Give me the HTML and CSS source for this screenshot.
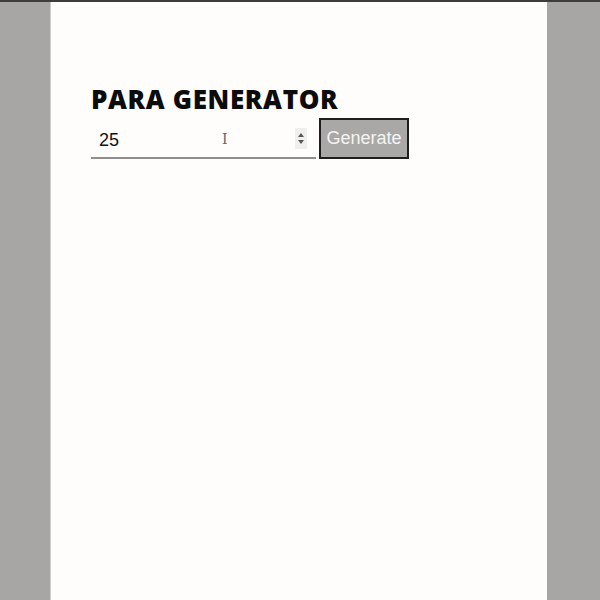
FILE: index.html
```html
<!DOCTYPE html>
<html>
<head>
<meta charset="utf-8">
<link rel="stylesheet" href="styles.css">
</head>
<body>
<div class="topline"></div>
<div class="stage">
  <main class="page">
    <h1 class="title">PARA GENERATOR</h1>
    <form class="controls">
      <div class="field">
        <input class="num" type="number" value="25">
        <span class="spin"><span class="up"></span><span class="down"></span></span>
        <span class="ibeam">I</span>
      </div>
      <button class="gen" type="button">Generate</button>
    </form>
  </main>
</div>
</body>
</html>
```
FILE: styles.css
```css
html, body {
  margin: 0;
  padding: 0;
  height: 100%;
  background: #a7a6a4;
}
.topline {
  height: 2px;
  background: #3d3d3d;
}
.stage {
  display: flex;
  justify-content: flex-start;
  padding-left: 50px;
  height: 598px;
}
.page {
  width: 497px;
  background: #fefdfc;
  border-left: 1px solid #cfcecc;
  box-sizing: border-box;
  padding: 82px 0 0 40px;
}
.title {
  margin: 0;
  font-family: "Open Sans", "Liberation Sans", sans-serif;
  font-weight: 800;
  font-size: 26px;
  line-height: 30px;
  color: #0c0c0c;
  letter-spacing: 0.65px;
}
.controls {
  display: flex;
  align-items: flex-start;
  margin-top: 4px;
  gap: 3px;
}
.field {
  position: relative;
  width: 225px;
  height: 39px;
  border-bottom: 2px solid #8f8e8c;
}
.num {
  width: 100%;
  height: 39px;
  box-sizing: border-box;
  border: none;
  background: transparent;
  font-family: "Liberation Sans", Arial, sans-serif;
  font-size: 18px;
  color: #111;
  padding: 5px 0 0 8px;
  outline: none;
  -moz-appearance: textfield;
}
.num::-webkit-inner-spin-button,
.num::-webkit-outer-spin-button {
  -webkit-appearance: none;
  margin: 0;
}
.spin {
  position: absolute;
  left: 204px;
  top: 10px;
  width: 12px;
  height: 21px;
  background: #efefee;
  display: flex;
  flex-direction: column;
  align-items: center;
  justify-content: center;
  gap: 3px;
}
.up {
  width: 0; height: 0;
  border-left: 3px solid transparent;
  border-right: 3px solid transparent;
  border-bottom: 4px solid #555;
}
.down {
  width: 0; height: 0;
  border-left: 3px solid transparent;
  border-right: 3px solid transparent;
  border-top: 4px solid #555;
}
.ibeam {
  position: absolute;
  left: 131px;
  top: 11px;
  font-family: "DejaVu Serif", serif;
  font-size: 14px;
  color: #666;
  line-height: 20px;
}
.gen {
  margin-top: 0;
  width: 90px;
  height: 41px;
  background: #a9a8a6;
  border: 2px solid #1e1e1e;
  color: #f4f4f4;
  font-family: "Liberation Sans", Arial, sans-serif;
  font-size: 18px;
  padding: 0;
}
```
